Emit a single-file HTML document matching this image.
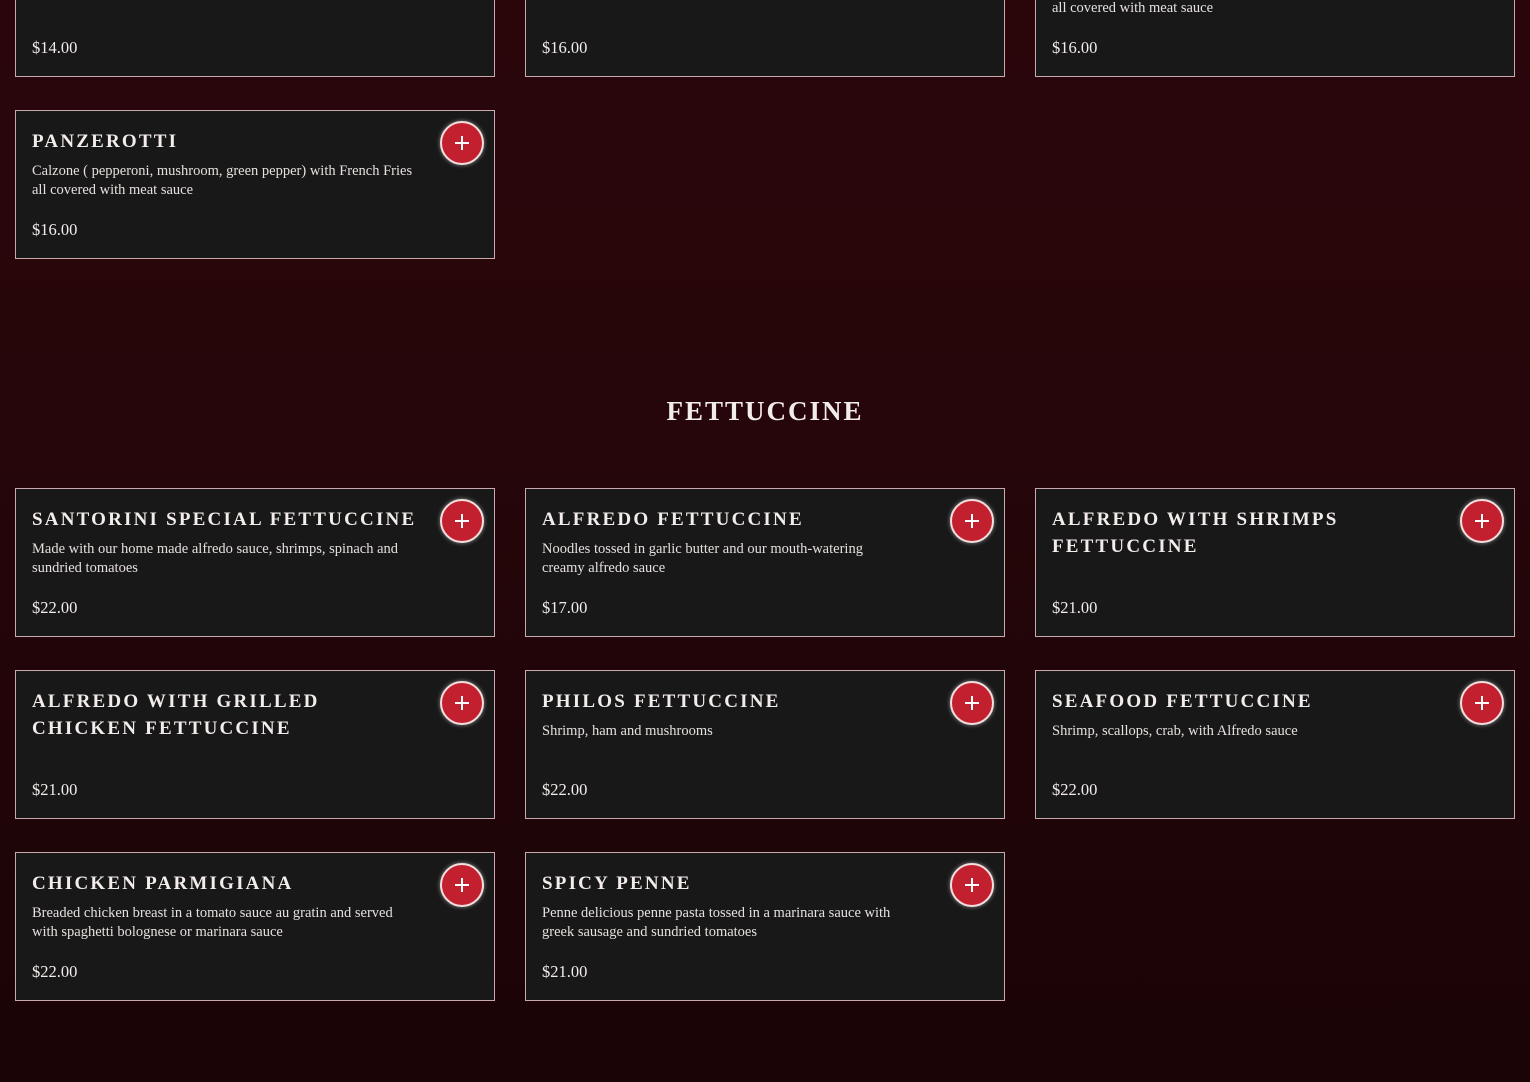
<!DOCTYPE html>
<html><head><meta charset="utf-8"><style>
*{box-sizing:border-box;margin:0;padding:0}
html,body{width:1530px;height:1082px;overflow:hidden}
body{background:linear-gradient(#2a060b 0%,#26060a 40%,#1a0406 100%);font-family:"Liberation Serif",serif;color:#f2ecea;position:relative}
.c{position:absolute;width:480px;height:149px;background:#181818;border:1px solid #c9a9ad}
.t{position:absolute;left:16px;top:17px;width:400px;font-size:19px;line-height:27px;letter-spacing:2.2px;font-weight:bold;text-transform:uppercase}
.d{position:absolute;left:16px;top:51px;width:400px;font-size:14.5px;line-height:19px;color:#e6e0de}
.p{position:absolute;left:16px;top:108px;font-size:16.5px;line-height:22px}
.b{position:absolute;right:10px;top:10px;width:44px;height:44px;border-radius:50%;background:#c3202f;border:2px solid #f4dede;box-shadow:0 0 4px rgba(255,255,255,.5)}
.b:before,.b:after{content:"";position:absolute;background:#fff;left:50%;top:50%}
.b:before{width:14px;height:1.6px;margin:-0.8px 0 0 -7px}
.b:after{width:1.6px;height:14px;margin:-7px 0 0 -0.8px}
h2{position:absolute;left:0;width:1530px;top:391px;text-align:center;font-size:27px;letter-spacing:2px;font-weight:bold;line-height:40px}
</style></head><body>
<div class="c" style="left:15px;top:-72px"><div class="p">$14.00</div></div>
<div class="c" style="left:525px;top:-72px"><div class="p">$16.00</div></div>
<div class="c" style="left:1035px;top:-72px"><div class="d" style="top:70px">all covered with meat sauce</div><div class="p">$16.00</div></div>

<div class="c" style="left:15px;top:110px"><div class="t">Panzerotti</div><div class="d" style="width:385px">Calzone ( pepperoni, mushroom, green pepper) with French Fries all covered with meat sauce</div><div class="p">$16.00</div><div class="b"></div></div>

<h2>FETTUCCINE</h2>

<div class="c" style="left:15px;top:488px"><div class="t" style="width:430px;white-space:nowrap">Santorini Special Fettuccine</div><div class="d" style="width:410px">Made with our home made alfredo sauce, shrimps, spinach and sundried tomatoes</div><div class="p">$22.00</div><div class="b"></div></div>
<div class="c" style="left:525px;top:488px"><div class="t">Alfredo Fettuccine</div><div class="d" style="width:360px">Noodles tossed in garlic butter and our mouth-watering creamy alfredo sauce</div><div class="p">$17.00</div><div class="b"></div></div>
<div class="c" style="left:1035px;top:488px"><div class="t" style="width:320px">Alfredo with Shrimps Fettuccine</div><div class="p">$21.00</div><div class="b"></div></div>

<div class="c" style="left:15px;top:670px"><div class="t" style="width:310px">Alfredo with Grilled Chicken Fettuccine</div><div class="p">$21.00</div><div class="b"></div></div>
<div class="c" style="left:525px;top:670px"><div class="t">Philos Fettuccine</div><div class="d">Shrimp, ham and mushrooms</div><div class="p">$22.00</div><div class="b"></div></div>
<div class="c" style="left:1035px;top:670px"><div class="t">Seafood Fettuccine</div><div class="d">Shrimp, scallops, crab, with Alfredo sauce</div><div class="p">$22.00</div><div class="b"></div></div>

<div class="c" style="left:15px;top:852px"><div class="t">Chicken Parmigiana</div><div class="d" style="width:385px">Breaded chicken breast in a tomato sauce au gratin and served with spaghetti bolognese or marinara sauce</div><div class="p">$22.00</div><div class="b"></div></div>
<div class="c" style="left:525px;top:852px"><div class="t">Spicy Penne</div><div class="d" style="width:370px">Penne delicious penne pasta tossed in a marinara sauce with greek sausage and sundried tomatoes</div><div class="p">$21.00</div><div class="b"></div></div>
</body></html>
